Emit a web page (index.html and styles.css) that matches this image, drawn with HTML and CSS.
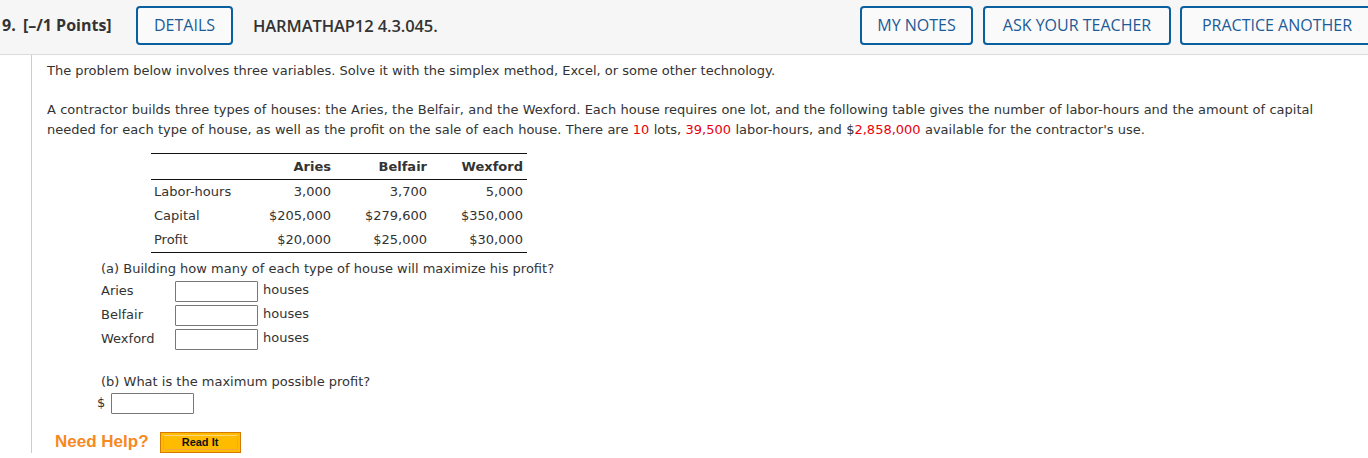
FILE: index.html
```html
<!DOCTYPE html>
<html>
<head>
<meta charset="utf-8">
<link rel="stylesheet" href="styles.css">
</head>
<body>
<div class="header">
  <div class="points"><span class="qnum">9.</span> [–/1 Points]</div>
  <button class="hbtn details">DETAILS</button>
  <div class="qtitle">HARMATHAP12 4.3.045.</div>
  <div class="spacer"></div>
  <button class="hbtn notes">MY NOTES</button>
  <button class="hbtn ask">ASK YOUR TEACHER</button>
  <button class="hbtn practice">PRACTICE ANOTHER</button>
</div>
<div class="main">
  <div class="content">
    <p class="intro">The problem below involves three variables. Solve it with the simplex method, Excel, or some other technology.</p>
    <p class="para">A contractor builds three types of houses: the Aries, the Belfair, and the Wexford. Each house requires one lot, and the following table gives the number of labor-hours and the amount of capital needed for each type of house, as well as the profit on the sale of each house. There are <span class="red">10</span> lots, <span class="red">39,500</span> labor-hours, and $<span class="red">2,858,000</span> available for the contractor's use.</p>
    <table class="data">
      <thead>
        <tr><th class="c0"></th><th class="c1">Aries</th><th class="c2">Belfair</th><th class="c3">Wexford</th></tr>
      </thead>
      <tbody>
        <tr><td>Labor-hours</td><td>3,000</td><td>3,700</td><td>5,000</td></tr>
        <tr><td>Capital</td><td>$205,000</td><td>$279,600</td><td>$350,000</td></tr>
        <tr><td>Profit</td><td>$20,000</td><td>$25,000</td><td>$30,000</td></tr>
      </tbody>
    </table>
    <div class="part">
      <div class="q">(a) Building how many of each type of house will maximize his profit?</div>
      <div class="arow"><span class="lab">Aries</span><span class="box"></span><span class="unit">houses</span></div>
      <div class="arow"><span class="lab">Belfair</span><span class="box"></span><span class="unit">houses</span></div>
      <div class="arow"><span class="lab">Wexford</span><span class="box"></span><span class="unit">houses</span></div>
    </div>
    <div class="part partb">
      <div class="q">(b) What is the maximum possible profit?</div>
      <div class="brow"><span class="dollar">$</span><span class="box"></span></div>
    </div>
    <div class="help">
      <span class="needhelp">Need Help?</span>
      <span class="readit"><span class="readit-in">Read It</span></span>
    </div>
  </div>
</div>
</body>
</html>
```
FILE: styles.css
```css
html, body {
  margin: 0;
  padding: 0;
  background: #fff;
}
body {
  font-family: "DejaVu Sans", Verdana, sans-serif;
  color: #333;
}
.header {
  display: flex;
  align-items: center;
  height: 50px;
  padding-bottom: 4px;
  background: #f6f6f6;
  border-bottom: 1px solid #dcdcdc;
  font-family: "Open Sans", "Noto Sans", sans-serif;
  color: #333;
}
.points {
  font-weight: 700;
  font-size: 16px;
  margin-left: 2px;
  width: 134px;
  white-space: nowrap;
}
.qnum { margin-right: 3px; }
.hbtn {
  font-family: "Open Sans", "Noto Sans", sans-serif;
  font-size: 16px;
  color: #1c5a98;
  background: #fafafa;
  border: 2px solid #0a5f9f;
  border-radius: 4px;
  height: 39px;
  padding: 0;
  margin: 0;
  box-sizing: border-box;
}
.details { width: 97px; }
.qtitle {
  margin-left: 20px;
  font-weight: 600;
  font-size: 16.5px;
  letter-spacing: -0.1px;
}
.spacer { flex: 1; }
.notes { width: 113px; }
.ask { width: 188px; margin-left: 10px; }
.practice { width: 194px; margin-left: 9px; margin-right: -6px; }

.main {
  margin-left: 31px;
  border-left: 1px solid #ccc;
  padding-left: 15px;
  padding-top: 6px;
}
.content {
  font-size: 13px;
  line-height: 20px;
}
p { margin: 0; }
.para { margin-top: 19px; width: 1290px; word-spacing: 0.2px; }
.red { color: #e8000b; }

.data {
  border-collapse: collapse;
  margin-top: 13px;
  margin-left: 104px;
  border-top: 1px solid #111;
  border-bottom: 1px solid #111;
}
.data th {
  height: 25px;
  padding: 0 4px 0 0;
  text-align: right;
  font-weight: bold;
  border-bottom: 1px solid #111;
}
.data td {
  height: 24px;
  padding: 0 4px 0 0;
  text-align: right;
}
.data td:first-child { text-align: left; padding-left: 3px; }
.c0 { width: 84px; }
.c1 { width: 92px; }
.c2 { width: 92px; }
.c3 { width: 92px; }

.part { margin-left: 54px; }
.part .q { margin-top: 6px; }
.arow {
  display: flex;
  align-items: center;
  height: 24px;
}
.lab { width: 74px; }
.box {
  display: inline-block;
  width: 81px;
  height: 19px;
  border: 1px solid #777;
  border-radius: 1px;
  background: #fff;
}
.unit { margin-left: 5px; margin-top: -3px; }
.partb { margin-top: 21px; margin-left: 54px; }
.partb .q { margin-top: 0; }
.brow {
  display: flex;
  align-items: center;
  height: 22px;
  margin-left: -4px;
}
.dollar { width: 14px; }
.help {
  display: flex;
  align-items: center;
  margin-top: 17px;
  margin-left: 8px;
  height: 22px;
}
.needhelp {
  font-family: "Liberation Sans", Arial, sans-serif;
  font-weight: bold;
  font-size: 17px;
  color: #f6891f;
}
.readit {
  margin-left: 11px;
  display: inline-block;
  border: 1px solid #d47a00;
  background: #ffbb00;
  padding: 2px;
}
.readit-in {
  display: block;
  width: 73px;
  height: 13px;
  border: 1px solid #f1a545;
  border-top-color: #ffd680;
  text-align: center;
  font-family: "Liberation Sans", Arial, sans-serif;
  font-weight: bold;
  font-size: 11px;
  line-height: 13px;
  color: #111;
}
```
